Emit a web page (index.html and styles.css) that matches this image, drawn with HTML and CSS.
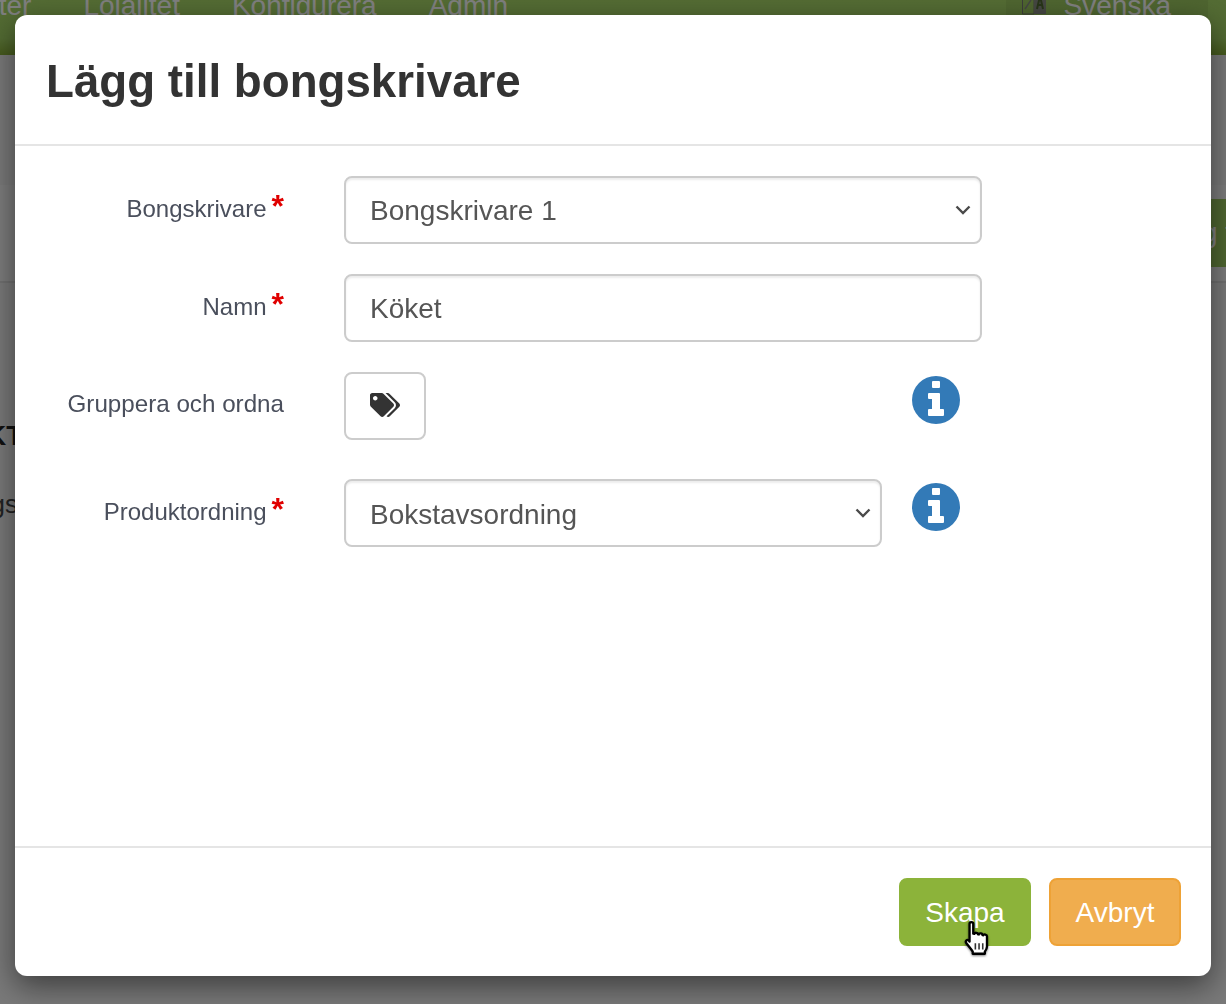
FILE: index.html
```html
<!DOCTYPE html>
<html lang="sv">
<head>
<meta charset="utf-8">
<title>Lägg till bongskrivare</title>
<link rel="stylesheet" href="styles.css">
</head>
<body>
<div class="page">
  <nav class="nav">
    <span class="nav-item nav-first">Produkter</span>
    <span class="nav-item">Lojalitet</span>
    <span class="nav-item">Konfigurera</span>
    <span class="nav-item">Admin</span>
    <span class="nav-lang">
      <svg class="lang-icon" viewBox="0 0 24 24" aria-hidden="true"><path d="M.5 1h11.500v22H.5z" fill="none" stroke="#777b73" stroke-width="1"/><path d="M12 1h12v22H12z" fill="#8a8e85"/><path d="M15 18l3-13 3 13M16 14h4" fill="none" stroke="#4f6a30" stroke-width="2"/><path d="M3 18l6-9M3 8h6" stroke="#8a8e85" stroke-width="1.500" fill="none"/></svg>
      <span class="lang-name">Svenska</span>
    </span>
  </nav>
  <div class="toolbar">
    <span class="tool-btn">g t</span>
  </div>
  <div class="bg-rows">
    <div class="bg-head">PRODUKT</div>
    <div class="bg-row">Inställningsnamn</div>
  </div>
</div>
<div class="backdrop"></div>
<div class="overlay">
  <form class="modal">
    <header class="modal-header">
      <h1 class="modal-title">Lägg till bongskrivare</h1>
    </header>
    <div class="modal-body">
      <div class="row">
        <label class="label">Bongskrivare<span class="req">*</span></label>
        <div class="select-wrap wide">
          <select class="control"><option>Bongskrivare 1</option></select>
          <svg class="chevron" viewBox="0 0 16 10" aria-hidden="true"><path d="M1.500 1.500L8 8l6.500-6.500" fill="none" stroke="#4a4a4a" stroke-width="2.400"/></svg>
        </div>
      </div>
      <div class="row">
        <label class="label">Namn<span class="req">*</span></label>
        <input class="control wide" type="text" value="Köket">
      </div>
      <div class="row row-tall">
        <label class="label label-plain">Gruppera och ordna</label>
        <div class="narrow">
          <button class="tag-btn" type="button">
            <svg class="tag-icon" viewBox="0 0 640 512" aria-hidden="true"><path fill="#333" d="M497.941 225.941L286.059 14.059A48 48 0 0 0 252.118 0H48C21.49 0 0 21.49 0 48v204.118a48 48 0 0 0 14.059 33.941l211.882 211.882c18.744 18.745 49.136 18.746 67.882 0l204.118-204.118c18.745-18.745 18.745-49.137 0-67.882zM112 160c-26.51 0-48-21.49-48-48s21.49-48 48-48 48 21.49 48 48-21.49 48-48 48zm513.941 133.823L421.823 497.941c-18.745 18.745-49.137 18.745-67.882 0l-.36-.36L527.64 323.522c16.999-16.999 26.36-39.6 26.36-63.64s-9.362-46.641-26.36-63.64L331.397 0h48.721a48 48 0 0 1 33.941 14.059l211.882 211.882c18.745 18.745 18.745 49.137 0 67.882z"/></svg>
          </button>
        </div>
        <svg class="info" viewBox="0 0 48 48" aria-hidden="true"><circle cx="24" cy="24" r="24" fill="#337ab7"/><path fill="#fff" d="M21 5h6a1 1 0 0 1 1 1v5a1 1 0 0 1-1 1h-6a1 1 0 0 1-1-1V6a1 1 0 0 1 1-1zM17 17h10a1 1 0 0 1 1 1v15h3a1 1 0 0 1 1 1v5a1 1 0 0 1-1 1H17a1 1 0 0 1-1-1v-5a1 1 0 0 1 1-1h3V23h-3a1 1 0 0 1-1-1v-4a1 1 0 0 1 1-1z"/></svg>
      </div>
      <div class="row">
        <label class="label">Produktordning<span class="req">*</span></label>
        <div class="select-wrap narrow">
          <select class="control control-low"><option>Bokstavsordning</option></select>
          <svg class="chevron" viewBox="0 0 16 10" aria-hidden="true"><path d="M1.500 1.500L8 8l6.500-6.500" fill="none" stroke="#4a4a4a" stroke-width="2.400"/></svg>
        </div>
        <svg class="info" viewBox="0 0 48 48" aria-hidden="true"><circle cx="24" cy="24" r="24" fill="#337ab7"/><path fill="#fff" d="M21 5h6a1 1 0 0 1 1 1v5a1 1 0 0 1-1 1h-6a1 1 0 0 1-1-1V6a1 1 0 0 1 1-1zM17 17h10a1 1 0 0 1 1 1v15h3a1 1 0 0 1 1 1v5a1 1 0 0 1-1 1H17a1 1 0 0 1-1-1v-5a1 1 0 0 1 1-1h3V23h-3a1 1 0 0 1-1-1v-4a1 1 0 0 1 1-1z"/></svg>
      </div>
    </div>
    <footer class="modal-footer">
      <button class="btn btn-create" type="button">Skapa
        <svg class="cursor" viewBox="0 0 32 36" aria-hidden="true"><path d="M8 3.500c0-2 3.500-2 3.500 0V13l1 .2c0-1.500 3.500-1.500 3.500.3l.8.2c.2-1.500 3.400-1.300 3.400.5l.8.3c.5-1.300 3.500-1 3.500 1V25c0 2-1 3.500-2 5v2H11v-2c-1.500-2.500-3.500-4.500-6-8-1.500-2 .5-4 2.300-2.500L8 20.500z" fill="#fff" stroke="#000" stroke-width="2.200" stroke-linejoin="round"/><path d="M13.500 22v6M17 22v6M20.500 22v6" stroke="#333" stroke-width="1.500"/></svg>
      </button>
      <button class="btn btn-cancel" type="button">Avbryt</button>
    </footer>
  </form>
</div>
</body>
</html>
```

FILE: styles.css
```css
* { box-sizing: border-box; }
html, body { margin: 0; height: 100%; overflow: hidden; }
body { font-family: "Liberation Sans", Arial, sans-serif; background: #fff; color: #333; }

.page { height: 1004px; overflow: hidden; background: #f2f2f2; }
.nav {
  height: 55px; display: flex; align-items: flex-start; gap: 52px;
  background: linear-gradient(#a8d868 0, #a4d464 70%, #8cb33a 100%);
  color: #fff; font-size: 28px; line-height: 28px;
}
.nav-item { margin-top: -8px; white-space: nowrap; }
.nav-first { margin-left: -90px; }
.nav-lang {
  margin-left: auto; margin-right: 18px; height: 55px; padding: 0 37px 0 16px;
  background: rgba(0, 0, 0, .06);
  display: flex; align-items: flex-start; gap: 18px; white-space: nowrap;
}
.lang-icon { width: 24px; height: 24px; margin-top: -9px; flex: none; }
.lang-name { margin-top: -8px; }

.toolbar {
  margin-top: 130px; height: 98px; padding-top: 14px;
  background: #f8f8f8; border-bottom: 2px solid #e0e0e0;
  display: flex; justify-content: flex-end; align-items: flex-start;
}
.tool-btn {
  width: 15px; height: 68px; background: #9fce62; color: #fff;
  font-size: 28px; line-height: 68px; white-space: pre; overflow: hidden; text-indent: -9px;
}
.bg-rows { padding-top: 137px; }
.bg-head { font-size: 28px; font-weight: bold; line-height: 32px; margin-left: -115px; color: #222; }
.bg-row { font-size: 26px; line-height: 32px; margin-top: 36px; margin-left: -112px; color: #444; }

.backdrop { position: fixed; inset: 0; background: rgba(0, 0, 0, .5); }
.overlay { position: fixed; inset: 0; padding: 15px 15px 28px; display: flex; }
.modal {
  flex: 1; display: flex; flex-direction: column; background: #fff;
  border-radius: 12px; box-shadow: 0 10px 30px rgba(0, 0, 0, .5);
}
.modal-header { height: 131px; border-bottom: 2px solid #e5e5e5; padding: 32px 31px 0; }
.modal-title { margin: 0; font-size: 45.7px; line-height: 70px; font-weight: bold; color: #333; }
.modal-body { flex: 1; padding-top: 30px; }

.row { display: flex; align-items: flex-start; margin-bottom: 30px; }
.row-tall { margin-bottom: 39px; }
.label {
  width: 269px; margin-right: 60px; padding-top: 17px; text-align: right;
  font-size: 24px; line-height: 32px; color: #4a4f5c; white-space: nowrap;
}
.label-plain { padding-top: 16px; font-size: 24.2px; }
.req { color: #e00000; font-size: 32px; font-weight: bold; line-height: 20px; margin-left: 5px; }

.control {
  display: block; width: 100%; height: 68px; padding: 0 24px;
  background: #fff; border: 2px solid #ccc; border-radius: 8px;
  box-shadow: inset 0 2px 2px rgba(0, 0, 0, .075);
  font: 28px "Liberation Sans", Arial, sans-serif; color: #555;
  appearance: none; -webkit-appearance: none; outline: none;
}
input.control { padding-top: 2px; }
.control-low { padding-top: 2px; }
.wide { width: 638px; }
.narrow { width: 538px; }
.select-wrap { position: relative; }
.chevron { position: absolute; right: 11px; top: 29px; width: 16px; height: 10px; pointer-events: none; }

.tag-btn {
  display: flex; align-items: center; justify-content: center;
  width: 82px; height: 68px; padding: 0; background: #fff;
  border: 2px solid #ccc; border-radius: 8px;
}
.tag-icon { width: 30px; height: 24px; margin-top: -2px; }
.info { width: 48px; height: 48px; margin-left: 30px; margin-top: 4px; }

.modal-footer {
  height: 130px; border-top: 2px solid #e5e5e5; padding: 30px 30px 29px;
  display: flex; justify-content: flex-end; gap: 18px;
}
.btn {
  position: relative; width: 132px; height: 68px; border-radius: 8px; padding: 2px 0 0;
  font: 28px "Liberation Sans", Arial, sans-serif; color: #fff;
}
.btn-create { background: #8cb33a; border: 2px solid #8cb33a; }
.btn-cancel { background: #f0ad4e; border: 2px solid #eea236; }
.cursor { position: absolute; left: 60px; top: 40px; width: 34px; height: 38px; filter: drop-shadow(0 1px 1px rgba(0, 0, 0, .5)); }
```
